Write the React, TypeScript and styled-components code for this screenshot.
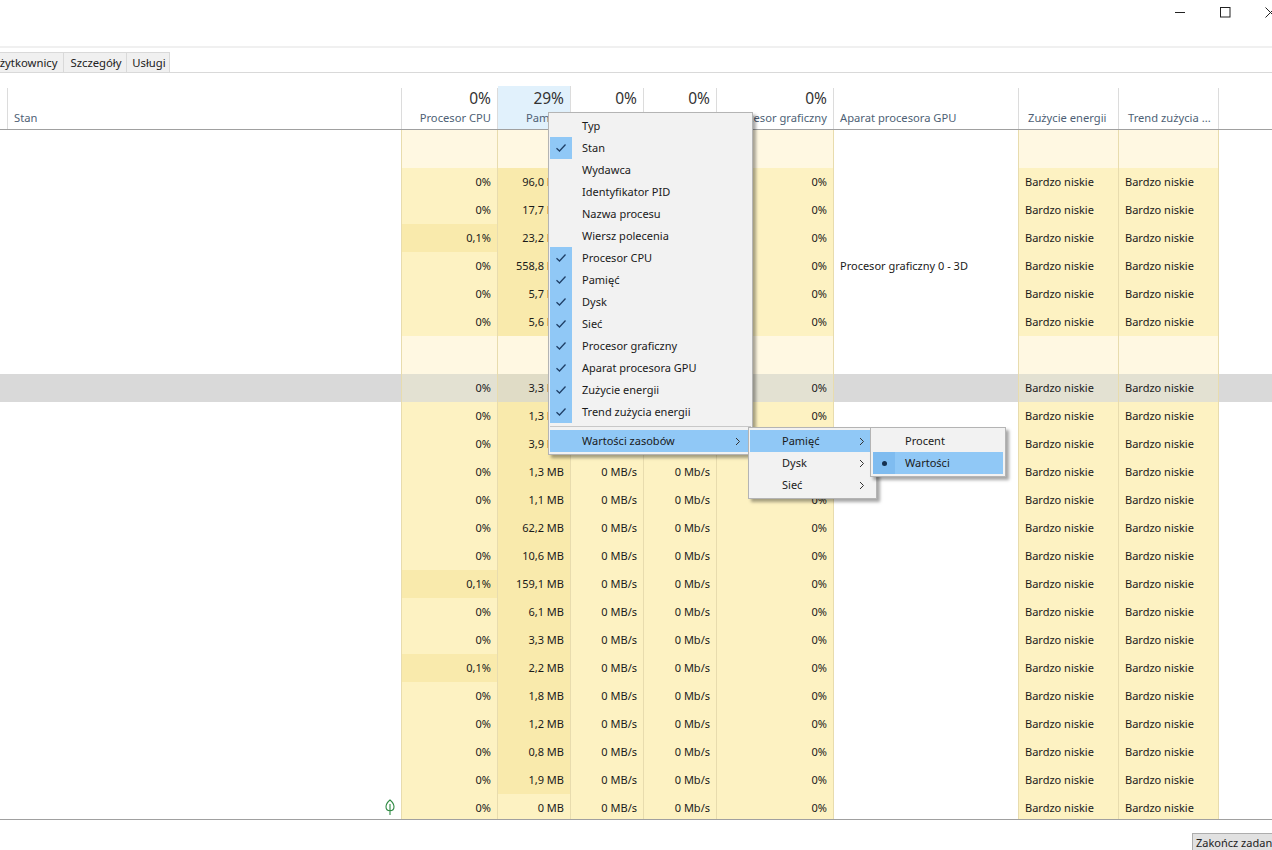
import styled, { createGlobalStyle } from 'styled-components';

const GlobalStyle = createGlobalStyle`
  html, body {
    margin: 0;
    padding: 0;
    background: #fff;
  }
  body {
    font-family: "Noto Sans", "Open Sans", sans-serif;
    font-size: 11px;
    color: #1a1a1a;
  }
`;

const COLUMNS = '8px 394px 96px 73px 73px 73px 117px 185px 100px 100px 1fr';

const Page = styled.div`
  position: relative;
  width: 1272px;
  height: 850px;
  overflow: hidden;
  display: flex;
  flex-direction: column;
  background: #fff;
`;

// Window title bar, the close button runs off the right edge
const TitleBar = styled.div`
  height: 46px;
  flex: none;
  display: flex;
  justify-content: flex-end;
  margin-right: -21px;
  border-bottom: 2px solid #f0f0f0;
`;

const WindowButton = styled.div`
  width: 45px;
  height: 25px;
  display: flex;
  align-items: center;
  justify-content: center;
`;

const TabStrip = styled.div`
  height: 24px;
  flex: none;
  display: flex;
  align-items: flex-end;
  border-bottom: 1px solid #d9d9d9;
`;

const Tab = styled.div<{ $width: number; $offset?: number }>`
  width: ${({ $width }) => $width}px;
  height: 20px;
  margin-left: ${({ $offset }) => $offset ?? 0}px;
  padding-left: 2px;
  box-sizing: border-box;
  display: flex;
  align-items: center;
  justify-content: center;
  background: #f0f0f0;
  border: 1px solid #d9d9d9;
  border-width: 1px 1px 0 0;
  color: #222;
  font-size: 11.3px;
  white-space: nowrap;
`;

const HeaderRow = styled.div`
  height: 57px;
  flex: none;
  box-sizing: border-box;
  padding-top: 15px;
  display: grid;
  grid-template-columns: ${COLUMNS};
  border-bottom: 1px solid #a0a0a0;
`;

const HeaderCell = styled.div<{ $left?: boolean; $pad?: number; $active?: boolean; $bare?: boolean }>`
  display: flex;
  flex-direction: column;
  justify-content: flex-end;
  align-items: ${({ $left }) => ($left ? 'flex-start' : 'flex-end')};
  padding: 0 ${({ $left, $pad }) => ($left ? 0 : $pad ?? 6)}px 3px ${({ $left, $pad }) => ($left ? $pad ?? 6 : 0)}px;
  border-right: ${({ $bare }) => ($bare ? 'none' : '1px solid #dcdcdc')};
  background: ${({ $active }) => ($active ? '#e1f1fc' : 'transparent')};
  margin-top: ${({ $active }) => ($active ? '-2px' : '0')};
  white-space: nowrap;
  overflow: hidden;
`;

const Percent = styled.div`
  font-size: 15.5px;
  line-height: 20px;
  margin-bottom: 2px;
  color: #333;
`;

const HeaderLabel = styled.div`
  font-size: 11.2px;
  line-height: 16px;
  color: #4e5f75;
`;

const Body = styled.div`
  flex: 1;
  min-height: 0;
  overflow: hidden;
  border-bottom: 1px solid #a0a0a0;
`;

const Row = styled.div<{ $group?: boolean; $selected?: boolean }>`
  height: ${({ $group }) => ($group ? 38 : 28)}px;
  display: grid;
  grid-template-columns: ${COLUMNS};
  background: ${({ $selected }) => ($selected ? '#d9d9d9' : 'transparent')};
`;

type Tone = 'plain' | 'base' | 'heat' | 'group' | 'selected' | 'selectedHeat';

const toneColors: Record<Tone, string> = {
  plain: 'transparent',
  base: '#fdf2c2',
  heat: '#f9eaac',
  group: '#fff8e2',
  selected: '#e3e1d2',
  selectedHeat: '#e0dcc6',
};

// $edge draws the rule on a white cell that stands left of a yellow column
const Cell = styled.div<{ $tone?: Tone; $left?: boolean; $pad?: number; $edge?: boolean }>`
  display: flex;
  align-items: center;
  justify-content: ${({ $left }) => ($left ? 'flex-start' : 'flex-end')};
  padding: 0 ${({ $left, $pad }) => ($left ? 0 : $pad ?? 6)}px 2px ${({ $left, $pad }) => ($left ? $pad ?? 6 : 0)}px;
  background: ${({ $tone }) => toneColors[$tone ?? 'plain']};
  border-right: ${({ $tone, $edge }) => (($tone && $tone !== 'plain') || $edge ? '1px solid #e8dcae' : 'none')};
  white-space: nowrap;
`;

const Footer = styled.div`
  flex: none;
  height: 30px;
  display: flex;
  align-items: flex-end;
  padding-left: 1192px;
`;

const EndTaskButton = styled.div`
  flex: none;
  width: 96px;
  height: 17px;
  padding-left: 3px;
  box-sizing: border-box;
  background: #e1e1e1;
  border: 1px solid #adadad;
  border-bottom: none;
  line-height: 17px;
  color: #222;
  white-space: nowrap;
`;

// Context menu and its two flyouts sit on top of the table
const Menu = styled.div<{ $x: number; $y: number; $width: number; $layer: number; $inset?: number }>`
  position: absolute;
  left: ${({ $x }) => $x}px;
  top: ${({ $y }) => $y}px;
  width: ${({ $width }) => $width}px;
  z-index: ${({ $layer }) => $layer};
  box-sizing: border-box;
  padding: 2px ${({ $inset }) => $inset ?? 1}px;
  background: #f2f2f2;
  border: 1px solid #b4b4b4;
  box-shadow: 3px 3px 3px rgba(0, 0, 0, 0.35);
`;

const MenuItem = styled.div<{ $active?: boolean }>`
  height: 22px;
  display: flex;
  align-items: center;
  background: ${({ $active }) => ($active ? '#90c8f6' : 'transparent')};
  color: #1a1a1a;
  font-size: 11px;
  white-space: nowrap;
`;

const Gutter = styled.div<{ $on?: boolean; $dark?: boolean }>`
  width: 22px;
  height: 22px;
  flex: none;
  margin-right: 10px;
  display: flex;
  align-items: center;
  justify-content: center;
  background: ${({ $on, $dark }) => ($dark ? '#7fbcf0' : $on ? '#90c8f6' : 'transparent')};
`;

const ItemLabel = styled.span`
  flex: 1;
  padding-bottom: 2px;
`;

const Arrow = styled.span`
  width: 27px;
  flex: none;
  display: flex;
  justify-content: center;
`;

const MenuSeparator = styled.div`
  height: 1px;
  margin: 3px 0 3px;
  background: #c8c8c8;
`;

const Bullet = styled.span`
  width: 5px;
  height: 5px;
  border-radius: 50%;
  background: #15304f;
`;

const Check = () => (
  <svg width="12" height="10" viewBox="0 0 12 10" fill="none">
    <path d="M1.5 5.2 L4.5 8 L10.5 1.5" stroke="#1f3f66" strokeWidth="1.3" />
  </svg>
);

const Chevron = () => (
  <svg width="6" height="9" viewBox="0 0 6 9" fill="none">
    <path d="M1 1 L4.5 4.5 L1 8" stroke="#333" strokeWidth="1" />
  </svg>
);

const Leaf = () => (
  <svg width="12" height="17" viewBox="0 0 12 17" fill="none">
    <path d="M6 1 C3 3.5 2 6 2 7.8 C2 10.2 3.7 11.8 6 11.8 C8.3 11.8 10 10.2 10 7.8 C10 6 9 3.5 6 1 Z M6 5 V16" stroke="#2f8a43" strokeWidth="1.1" />
  </svg>
);

const columnItems = [
  { label: 'Typ', on: false },
  { label: 'Stan', on: true },
  { label: 'Wydawca', on: false },
  { label: 'Identyfikator PID', on: false },
  { label: 'Nazwa procesu', on: false },
  { label: 'Wiersz polecenia', on: false },
  { label: 'Procesor CPU', on: true },
  { label: 'Pamięć', on: true },
  { label: 'Dysk', on: true },
  { label: 'Sieć', on: true },
  { label: 'Procesor graficzny', on: true },
  { label: 'Aparat procesora GPU', on: true },
  { label: 'Zużycie energii', on: true },
  { label: 'Trend zużycia energii', on: true },
];

interface Process {
  cpu?: string;
  mem?: string;
  group?: boolean;
  selected?: boolean;
  engine?: string;
  leaf?: boolean;
}

const processes: Process[] = [
  { group: true },
  { cpu: '0%', mem: '96,0 MB' },
  { cpu: '0%', mem: '17,7 MB' },
  { cpu: '0,1%', mem: '23,2 MB' },
  { cpu: '0%', mem: '558,8 MB', engine: 'Procesor graficzny 0 - 3D' },
  { cpu: '0%', mem: '5,7 MB' },
  { cpu: '0%', mem: '5,6 MB' },
  { group: true },
  { cpu: '0%', mem: '3,3 MB', selected: true },
  { cpu: '0%', mem: '1,3 MB' },
  { cpu: '0%', mem: '3,9 MB' },
  { cpu: '0%', mem: '1,3 MB' },
  { cpu: '0%', mem: '1,1 MB' },
  { cpu: '0%', mem: '62,2 MB' },
  { cpu: '0%', mem: '10,6 MB' },
  { cpu: '0,1%', mem: '159,1 MB' },
  { cpu: '0%', mem: '6,1 MB' },
  { cpu: '0%', mem: '3,3 MB' },
  { cpu: '0,1%', mem: '2,2 MB' },
  { cpu: '0%', mem: '1,8 MB' },
  { cpu: '0%', mem: '1,2 MB' },
  { cpu: '0%', mem: '0,8 MB' },
  { cpu: '0%', mem: '1,9 MB' },
  { cpu: '0%', mem: '0 MB', leaf: true },
];

const ProcessRow = ({ process }: { process: Process }) => {
  const { cpu, mem, group, selected, engine, leaf } = process;
  if (group) {
    return (
      <Row $group>
        <Cell />
        <Cell $edge />
        <Cell $tone="group" />
        <Cell $tone="group" />
        <Cell $tone="group" />
        <Cell $tone="group" />
        <Cell $tone="group" />
        <Cell $edge />
        <Cell $tone="group" />
        <Cell $tone="group" />
      </Row>
    );
  }
  const base: Tone = selected ? 'selected' : 'base';
  const heat: Tone = selected ? 'selectedHeat' : 'heat';
  return (
    <Row $selected={selected}>
      <Cell />
      <Cell $edge $pad={5}>{leaf && <Leaf />}</Cell>
      <Cell $tone={cpu === '0,1%' ? heat : base}>{cpu}</Cell>
      <Cell $tone={mem === '0 MB' ? base : heat}>{mem}</Cell>
      <Cell $tone={base}>0 MB/s</Cell>
      <Cell $tone={base}>0 Mb/s</Cell>
      <Cell $tone={base}>0%</Cell>
      <Cell $edge $left>{engine}</Cell>
      <Cell $tone={base} $left>Bardzo niskie</Cell>
      <Cell $tone={base} $left>Bardzo niskie</Cell>
    </Row>
  );
};

const App = () => (
  <Page>
    <GlobalStyle />
    <TitleBar>
      <WindowButton>
        <svg width="11" height="11" viewBox="0 0 11 11"><path d="M0 5.5 H10" stroke="#222" strokeWidth="1" /></svg>
      </WindowButton>
      <WindowButton>
        <svg width="11" height="11" viewBox="0 0 11 11" fill="none"><rect x="0.5" y="0.5" width="9.5" height="9.5" stroke="#222" /></svg>
      </WindowButton>
      <WindowButton>
        <svg width="11" height="11" viewBox="0 0 11 11"><path d="M0.5 0.5 L10.5 10.5 M10.5 0.5 L0.5 10.5" stroke="#222" strokeWidth="1" /></svg>
      </WindowButton>
    </TitleBar>
    <TabStrip>
      <Tab $width={80} $offset={-16}>Użytkownicy</Tab>
      <Tab $width={63}>Szczegóły</Tab>
      <Tab $width={43}>Usługi</Tab>
    </TabStrip>
    <HeaderRow>
      <HeaderCell $left />
      <HeaderCell $left><HeaderLabel>Stan</HeaderLabel></HeaderCell>
      <HeaderCell><Percent>0%</Percent><HeaderLabel>Procesor CPU</HeaderLabel></HeaderCell>
      <HeaderCell $active><Percent>29%</Percent><HeaderLabel>Pamięć</HeaderLabel></HeaderCell>
      <HeaderCell><Percent>0%</Percent><HeaderLabel>Dysk</HeaderLabel></HeaderCell>
      <HeaderCell><Percent>0%</Percent><HeaderLabel>Sieć</HeaderLabel></HeaderCell>
      <HeaderCell><Percent>0%</Percent><HeaderLabel>Procesor graficzny</HeaderLabel></HeaderCell>
      <HeaderCell $left><HeaderLabel>Aparat procesora GPU</HeaderLabel></HeaderCell>
      <HeaderCell $left $pad={9}><HeaderLabel>Zużycie energii</HeaderLabel></HeaderCell>
      <HeaderCell $left $pad={9}><HeaderLabel>Trend zużycia ...</HeaderLabel></HeaderCell>
      <HeaderCell $bare />
    </HeaderRow>
    <Body>
      {processes.map((process, index) => (
        <ProcessRow key={index} process={process} />
      ))}
    </Body>
    <Footer>
      <EndTaskButton>Zakończ zadanie</EndTaskButton>
    </Footer>

    <Menu $x={548} $y={112} $width={205} $layer={1}>
      {columnItems.map((item) => (
        <MenuItem key={item.label}>
          <Gutter $on={item.on}>{item.on && <Check />}</Gutter>
          <ItemLabel>{item.label}</ItemLabel>
        </MenuItem>
      ))}
      <MenuSeparator />
      <MenuItem $active>
        <Gutter />
        <ItemLabel>Wartości zasobów</ItemLabel>
        <Arrow><Chevron /></Arrow>
      </MenuItem>
    </Menu>
    <Menu $x={748} $y={427} $width={129} $layer={2}>
      <MenuItem $active>
        <Gutter />
        <ItemLabel>Pamięć</ItemLabel>
        <Arrow><Chevron /></Arrow>
      </MenuItem>
      <MenuItem>
        <Gutter />
        <ItemLabel>Dysk</ItemLabel>
        <Arrow><Chevron /></Arrow>
      </MenuItem>
      <MenuItem>
        <Gutter />
        <ItemLabel>Sieć</ItemLabel>
        <Arrow><Chevron /></Arrow>
      </MenuItem>
    </Menu>
    <Menu $x={870} $y={427} $width={136} $layer={3} $inset={2}>
      <MenuItem>
        <Gutter />
        <ItemLabel>Procent</ItemLabel>
      </MenuItem>
      <MenuItem $active>
        <Gutter $dark><Bullet /></Gutter>
        <ItemLabel>Wartości</ItemLabel>
      </MenuItem>
    </Menu>
  </Page>
);

export default App;
